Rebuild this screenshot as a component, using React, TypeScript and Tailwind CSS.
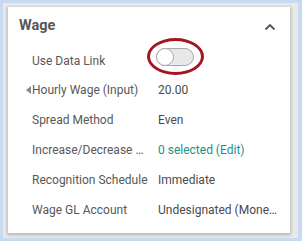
import React from "react";

const rows: { label: string; value: string; link?: boolean; arrow?: boolean }[] = [
  { label: "Hourly Wage (Input)", value: "20.00", arrow: true },
  { label: "Spread Method", value: "Even" },
  { label: "Increase/Decrease Schedule", value: "0 selected (Edit)", link: true },
  { label: "Recognition Schedule", value: "Immediate" },
  { label: "Wage GL Account", value: "Undesignated (Monetary)" },
];

export default function App() {
  return (
    <div
      className="w-[302px] h-[241px] bg-[#c8daf1] p-[3px] overflow-hidden"
      style={{ fontFamily: "Roboto, 'Liberation Sans', sans-serif" }}
    >
      <div className="w-[295px] h-[235px] bg-[#e9e9e9] pl-[5px] pt-[4px]">
        <div className="w-[282px] h-[226px] bg-white shadow-[0_1px_3px_1px_rgba(0,0,0,0.22)] flex flex-col">
          <div className="h-[38px] flex items-center pl-[11px] pr-[14px]">
            <span className="text-[14.5px] font-bold text-[#575757]">Wage</span>
            <div className="flex-1" />
            <svg width="12" height="8" viewBox="0 0 12 8" className="mt-[1px]">
              <path d="M1.5 6.5 L6 2 L10.5 6.5" fill="none" stroke="#555" strokeWidth="1.8" />
            </svg>
          </div>
          <div className="h-[30px] flex items-center pl-[24px]">
            <span className="w-[116px] text-[12px] text-[#585858] mt-[2px]">Use Data Link</span>
            <div className="ml-[8px] relative w-[38px] h-[18px] mb-[6px]">
              <div className="absolute inset-0 rounded-full bg-[#e8e8e8] border border-[#a9a9a9]" />
              <div className="absolute left-0 top-0 w-[18px] h-[18px] rounded-full bg-white border border-[#a9a9a9]" />
              <div className="absolute left-[-9px] top-[-10px] w-[57px] h-[37px] rounded-[50%] border-[3.5px] border-[#a5171f]" />
            </div>
          </div>
          {rows.map((r) => (
            <div key={r.label} className="h-[30px] flex items-center pl-[24px] relative">
              {r.arrow && (
                <svg width="5" height="8" viewBox="0 0 5 8" className="absolute left-[18px] top-[11px]">
                  <path d="M5 0 L0 4 L5 8 Z" fill="#8a8a8a" />
                </svg>
              )}
              <span className="w-[116px] text-[12px] text-[#585858] truncate">{r.label}</span>
              <span
                className={
                  "ml-[10px] w-[120px] text-[12px] truncate " +
                  (r.link ? "text-[#17918b]" : "text-[#4a4a4a]")
                }
              >
                {r.value}
              </span>
            </div>
          ))}
        </div>
      </div>
    </div>
  );
}
